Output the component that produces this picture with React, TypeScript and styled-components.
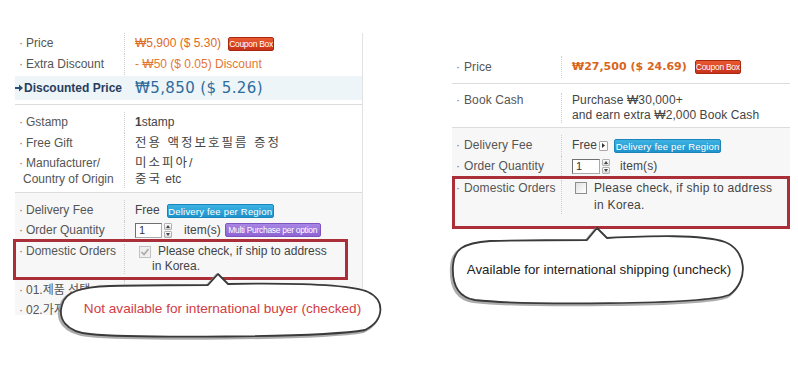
import React from 'react';
import styled, { createGlobalStyle } from 'styled-components';

const GlobalStyle = createGlobalStyle`
  body {
    margin: 0;
    background: #fff;
    font-family: "Liberation Sans", "Noto Sans CJK KR", Arial, sans-serif;
  }
`;

const RED = '#ab2f38';

const Page = styled.div`
  position: relative;
  width: 798px;
  height: 377px;
  overflow: hidden;
  display: flex;
  align-items: flex-start;
  padding-left: 15px;
  box-sizing: border-box;
`;

const Panel = styled.div<{ $top: number; $width: number; $left?: number; $height?: number; $border?: boolean; $spacing?: number }>`
  margin-top: ${p => p.$top}px;
  margin-left: ${p => p.$left ?? 0}px;
  width: ${p => p.$width}px;
  flex-shrink: 0;
  ${p => (p.$height ? `height: ${p.$height}px; overflow-x: visible; overflow-y: clip;` : '')}
  border-right: ${p => (p.$border ? '1px solid #e2e2e2' : 'none')};
  font-size: 12px;
  color: #444;
  letter-spacing: ${p => p.$spacing ?? 0}px;
`;

const Section = styled.div<{ $shade?: boolean; $pt?: number; $pb?: number; $line?: boolean }>`
  background: ${p => (p.$shade ? '#f7f7f7' : '#fff')};
  padding: ${p => p.$pt ?? 0}px 0 ${p => p.$pb ?? 0}px;
  border-bottom: ${p => (p.$line ? '1px solid #dcdcdc' : 'none')};
  box-shadow: ${p => (p.$line ? '0 1px 0 #efefef' : 'none')};
`;

const Row = styled.div<{ $col: number; $h?: number; $lh?: number; $pt?: number; $bg?: string; $mt?: number }>`
  display: grid;
  grid-template-columns: ${p => p.$col}px 1fr;
  min-height: ${p => p.$h ?? 21}px;
  line-height: ${p => p.$lh ?? p.$h ?? 21}px;
  padding-top: ${p => p.$pt ?? 0}px;
  margin-top: ${p => p.$mt ?? 0}px;
  background: ${p => p.$bg ?? 'transparent'};
  box-sizing: border-box;
`;

const Highlight = styled(Row)<{ $ml?: number; $mr?: number; $pb?: number }>`
  border: 3px solid ${RED};
  margin: 0 ${p => p.$mr ?? 0}px 0 ${p => p.$ml ?? 0}px;
  padding-bottom: ${p => p.$pb ?? 0}px;
  background: #f7f7f7;
`;

const Label = styled.div<{ $pl: number; $bullet?: number }>`
  padding-left: ${p => p.$pl}px;
  border-right: 1px dotted #cfcfcf;
  color: #555;
  white-space: nowrap;

  &::before {
    content: '·';
    display: inline-block;
    margin-left: -${p => p.$bullet ?? 4}px;
    width: ${p => (p.$bullet ?? 4) + 3}px;
    color: #777;
  }
`;

const StrongLabel = styled.div`
  display: flex;
  align-items: center;
  gap: 1px;
  font-weight: bold;
  color: #2a3d5c;
  white-space: nowrap;
`;

const Value = styled.div<{ $pl: number; $block?: boolean }>`
  padding-left: ${p => p.$pl}px;
  display: ${p => (p.$block ? 'block' : 'flex')};
  align-items: center;
  color: #444;
  white-space: nowrap;
`;

const Price = styled.span<{ $bold?: boolean }>`
  color: ${p => (p.$bold ? '#d9651c' : '#e0691c')};
  font-weight: ${p => (p.$bold ? 'bold' : 'normal')};
  font-family: ${p => (p.$bold ? '"DejaVu Sans", sans-serif' : 'inherit')};
  font-size: ${p => (p.$bold ? 11 : 12)}px;
  letter-spacing: 0;
`;

const Discount = styled.span`
  color: #e27834;
`;

const BigPrice = styled.span`
  color: #2f6c9c;
  font-family: "DejaVu Sans", sans-serif;
  font-size: 15px;
  letter-spacing: 0.4px;
`;

const Hangul = styled.span`
  font-size: 12.5px;
  letter-spacing: 2px;
`;

const Badge = styled.span<{ $kind: 'coupon' | 'delivery' | 'multi'; $w: number; $ml: number }>`
  display: inline-block;
  width: ${p => p.$w}px;
  height: 14px;
  margin-left: ${p => p.$ml}px;
  box-sizing: border-box;
  border-radius: 2px;
  color: #fff;
  text-align: center;
  white-space: nowrap;
  overflow: hidden;
  line-height: 13px;
  font-family: "Liberation Sans", Arial, sans-serif;
  font-size: ${p => (p.$kind === 'delivery' ? 9.5 : 8.5)}px;
  letter-spacing: ${p => (p.$kind === 'delivery' ? 0.2 : -0.3)}px;
  background: ${p =>
    p.$kind === 'coupon'
      ? 'linear-gradient(#ea5a30, #c8321a)'
      : p.$kind === 'delivery'
      ? 'linear-gradient(#3db2e2, #1e93cc)'
      : 'linear-gradient(#a886e4, #8d63d2)'};
  border: 1px solid ${p => (p.$kind === 'coupon' ? '#a8280f' : p.$kind === 'delivery' ? '#1a85bb' : '#7f55c4')};
`;

const QtyInput = styled.input<{ $w: number }>`
  width: ${p => p.$w}px;
  height: 15px;
  box-sizing: border-box;
  margin: 0;
  padding: 0 0 0 3px;
  border: 1px solid #aaa;
  border-top-color: #707070;
  border-left-color: #707070;
  background: #fff;
  font-family: "Liberation Sans", Arial, sans-serif;
  font-size: 11px;
  color: #333;
  outline: none;
`;

const Spinner = styled.span`
  display: inline-flex;
  flex-direction: column;
  justify-content: space-between;
  width: 8px;
  height: 15px;
  margin-left: 2px;
`;

const SpinBtn = styled.span`
  height: 7px;
  box-sizing: border-box;
  border: 1px solid #b2b2b2;
  border-radius: 1px;
  background: linear-gradient(#fdfdfd, #d9d9d9);
  display: flex;
  align-items: center;
  justify-content: center;
`;

const Unit = styled.span<{ $ml: number }>`
  margin-left: ${p => p.$ml}px;
`;

const MiniArrow = styled.span`
  display: inline-flex;
  align-items: center;
  justify-content: center;
  width: 9px;
  height: 10px;
  margin-left: 2px;
  box-sizing: border-box;
  border: 1px solid #a8a8a8;
  border-radius: 1px;
  background: #fff;
`;

const CheckLine = styled.div<{ $ml: number }>`
  display: flex;
  align-items: flex-start;
  padding-left: ${p => p.$ml}px;
  color: #444;
`;

const Box = styled.span<{ $checked?: boolean; $top: number }>`
  flex-shrink: 0;
  width: 12px;
  height: 12px;
  margin-top: ${p => p.$top}px;
  box-sizing: border-box;
  border: 1px solid ${p => (p.$checked ? '#c2c2c2' : '#8e8e8e')};
  background: ${p => (p.$checked ? '#efefef' : 'linear-gradient(135deg, #e2e2e2, #fff)')};
  display: flex;
  align-items: center;
  justify-content: center;
`;

const CheckText = styled.span<{ $indent: number; $pl: number; $spacing?: number }>`
  padding-left: ${p => p.$pl}px;
  text-indent: ${p => p.$indent}px;
  letter-spacing: ${p => p.$spacing ?? 0}px;
  white-space: nowrap;
`;

const BubbleWrap = styled.div<{ $x: number; $y: number; $w: number; $h: number }>`
  position: absolute;
  left: ${p => p.$x}px;
  top: ${p => p.$y}px;
  width: ${p => p.$w}px;
  height: ${p => p.$h}px;
`;

const BubbleSvg = styled.svg`
  position: absolute;
  inset: 0;
  overflow: visible;
`;

const BubbleText = styled.div<{ $top: number; $color: string; $dx?: number; $size: number }>`
  position: absolute;
  left: ${p => p.$dx ?? 0}px;
  right: 0;
  top: ${p => p.$top}px;
  line-height: 18px;
  text-align: center;
  font-family: "Liberation Sans", Arial, sans-serif;
  font-size: ${p => p.$size}px;
  color: ${p => p.$color};
  white-space: nowrap;
`;

const Up = () => (
  <svg width="4" height="3" viewBox="0 0 4 3"><path d="M0 3L2 0 4 3z" fill="#444" /></svg>
);
const Down = () => (
  <svg width="4" height="3" viewBox="0 0 4 3"><path d="M0 0L2 3 4 0z" fill="#444" /></svg>
);

const Qty: React.FC<{ w: number; unitGap: number }> = ({ w, unitGap }) => (
  <>
    <QtyInput $w={w} readOnly value="1" />
    <Spinner>
      <SpinBtn><Up /></SpinBtn>
      <SpinBtn><Down /></SpinBtn>
    </Spinner>
    <Unit $ml={unitGap}>item(s)</Unit>
  </>
);

const Bubble: React.FC<{ x: number; y: number; w: number; h: number; d: string; text: string; color: string; textTop: number; dx?: number; size: number }> = props => (
  <BubbleWrap $x={props.x} $y={props.y} $w={props.w} $h={props.h}>
    <BubbleSvg width={props.w} height={props.h} viewBox={`0 0 ${props.w} ${props.h}`}>
      <path d={props.d} fill="#fff" stroke="#8a8a8a" strokeWidth="3" transform="translate(-1.5 1.5)" opacity="0.7" />
      <path d={props.d} fill="#fff" stroke="#3a3a3a" strokeWidth="1.8" strokeLinejoin="round" />
    </BubbleSvg>
    <BubbleText $top={props.textTop} $color={props.color} $dx={props.dx} $size={props.size}>{props.text}</BubbleText>
  </BubbleWrap>
);

const leftBubble =
  'M153 15 L163 4 L173 14 C235 13 295 14 313 22 C330 30 330 50 310 60 C265 68 75 68 35 64 C10 62 3 48 7 35 C10 22 25 17 55 16 C95 15 135 15 153 15 Z';
const rightBubble =
  'M139 16 L149 4 L159 14 C202 12 254 10 277 18 C298 26 302 56 281 71 C254 81 72 81 27 76 C7 73 4 56 5 41 C6 26 14 19 42 17 C82 16 122 16 139 16 Z';

const App: React.FC = () => (
  <>
    <GlobalStyle />
    <Page>
      <Panel $top={33} $width={347} $height={282} $border>
        <Section $pb={4} $line>
          <Row $col={110}>
            <Label $pl={8}>Price</Label>
            <Value $pl={10}>
              <Price>₩5,900 ($ 5.30)</Price>
              <Badge $kind="coupon" $w={46} $ml={7}>Coupon Box</Badge>
            </Value>
          </Row>
          <Row $col={110}>
            <Label $pl={8}>Extra Discount</Label>
            <Value $pl={10}>
              <Discount>- ₩50 ($ 0.05) Discount</Discount>
            </Value>
          </Row>
          <Row $col={110} $h={24} $mt={1} $bg="#edf5f9">
            <StrongLabel>
              <svg width="8" height="8" viewBox="0 0 8 8"><path d="M0 3h4V0.5L8 4 4 7.5V5H0z" fill="#2a4d75" /></svg>
              Discounted Price
            </StrongLabel>
            <Value $pl={10}>
              <BigPrice>₩5,850 ($ 5.26)</BigPrice>
            </Value>
          </Row>
        </Section>

        <Section $pt={7} $pb={4} $line>
          <Row $col={110}>
            <Label $pl={8}>Gstamp</Label>
            <Value $pl={10}>
              <span><b>1</b>stamp</span>
            </Value>
          </Row>
          <Row $col={110}>
            <Label $pl={8}>Free Gift</Label>
            <Value $pl={10}>
              <Hangul>전용 액정보호필름 증정</Hangul>
            </Value>
          </Row>
          <Row $col={110} $h={34} $lh={16} $pt={1}>
            <Label $pl={8}>
              Manufacturer/
              <br />
              Country of Origin
            </Label>
            <Value $pl={10} $block>
              <Hangul>미소피아/</Hangul>
              <br />
              <Hangul>중국</Hangul> etc
            </Value>
          </Row>
        </Section>

        <Section $shade $pt={7}>
          <Row $col={110}>
            <Label $pl={8}>Delivery Fee</Label>
            <Value $pl={10}>
              Free
              <Badge $kind="delivery" $w={107} $ml={7}>Delivery fee per Region</Badge>
            </Value>
          </Row>
          <Row $col={110} $h={18}>
            <Label $pl={8}>Order Quantity</Label>
            <Value $pl={10}>
              <Qty w={27} unitGap={12} />
              <Badge $kind="multi" $w={96} $ml={4}>Multi Purchase per option</Badge>
            </Value>
          </Row>
          <Highlight $col={109} $h={41} $lh={15} $pt={2} $pb={3} $ml={-2} $mr={14}>
            <Label $pl={7}>Domestic Orders</Label>
            <CheckLine $ml={14}>
              <Box $checked $top={2}>
                <svg width="10" height="10" viewBox="0 0 10 10"><path d="M1.5 5 L4 7.5 L8.5 2" fill="none" stroke="#a9a9a9" strokeWidth="1.6" /></svg>
              </Box>
              <CheckText $indent={6} $pl={1}>
                Please check, if ship to address
                <br />
                in Korea.
              </CheckText>
            </CheckLine>
          </Highlight>
          <Row $col={110} $h={20}>
            <Label $pl={8}>01.제품 선택</Label>
            <Value $pl={10} />
          </Row>
          <Row $col={110}>
            <Label $pl={8}>02.가지 선택</Label>
            <Value $pl={10} />
          </Row>
        </Section>
      </Panel>

      <Panel $top={56} $left={89} $width={338} $spacing={0.1}>
        <Section $pb={5} $line>
          <Row $col={110} $h={22}>
            <Label $pl={9} $bullet={5}>Price</Label>
            <Value $pl={10}>
              <Price $bold>₩27,500 ($ 24.69)</Price>
              <Badge $kind="coupon" $w={46} $ml={8}>Coupon Box</Badge>
            </Value>
          </Row>
        </Section>

        <Section $pt={6} $pb={4} $line>
          <Row $col={110} $h={33} $lh={15} $pt={3}>
            <Label $pl={9} $bullet={5}>Book Cash</Label>
            <Value $pl={10} $block>
              Purchase ₩30,000+
              <br />
              and earn extra ₩2,000 Book Cash
            </Value>
          </Row>
        </Section>

        <Section $shade $pt={7}>
          <Row $col={110}>
            <Label $pl={9} $bullet={5}>Delivery Fee</Label>
            <Value $pl={10}>
              Free
              <MiniArrow>
                <svg width="3" height="5" viewBox="0 0 3 5"><path d="M0 0L3 2.5 0 5z" fill="#333" /></svg>
              </MiniArrow>
              <Badge $kind="delivery" $w={107} $ml={6}>Delivery fee per Region</Badge>
            </Value>
          </Row>
          <Row $col={110} $h={20}>
            <Label $pl={9} $bullet={5}>Order Quantity</Label>
            <Value $pl={10}>
              <Qty w={28} unitGap={10} />
            </Value>
          </Row>
          <Highlight $col={107} $h={53} $lh={17} $pt={1} $pb={12}>
            <Label $pl={6} $bullet={5}>Domestic Orders</Label>
            <CheckLine $ml={13}>
              <Box $top={2} />
              <CheckText $indent={0} $pl={7} $spacing={0.3}>
                Please check, if ship to address
                <br />
                in Korea.
              </CheckText>
            </CheckLine>
          </Highlight>
        </Section>
      </Panel>

      <Bubble
        x={55}
        y={270}
        w={335}
        h={72}
        d={leftBubble}
        text="Not available for international buyer (checked)"
        color="#d23c44"
        textTop={30}
        size={13.6}
      />
      <Bubble
        x={448}
        y={224}
        w={300}
        h={84}
        d={rightBubble}
        text="Available for international shipping (uncheck)"
        color="#222"
        textTop={37}
        dx={2}
        size={13.3}
      />
    </Page>
  </>
);

export default App;
